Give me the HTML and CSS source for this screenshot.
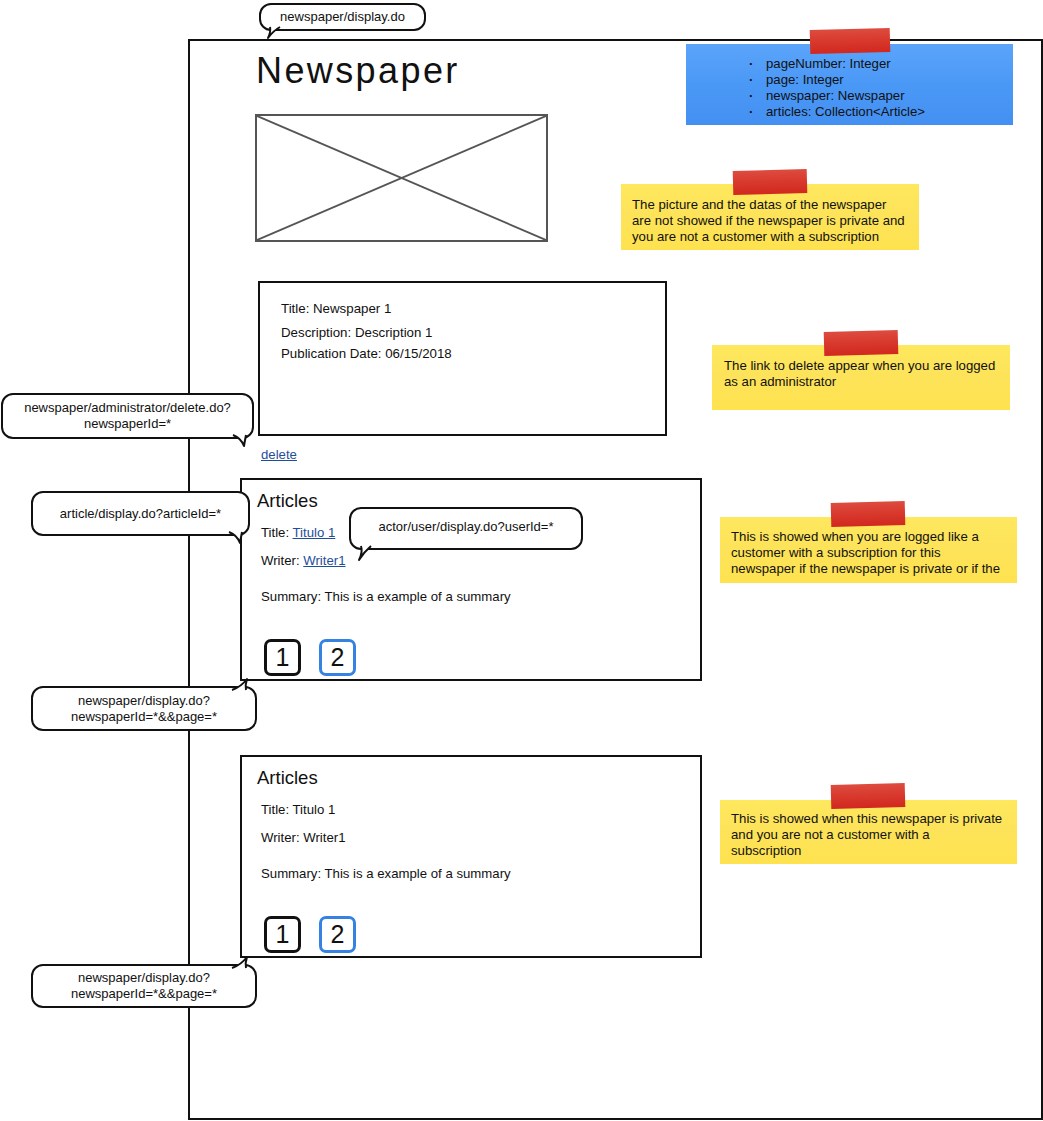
FILE: index.html
```html
<!DOCTYPE html>
<html>
<head>
    <meta charset="utf-8">
    <title>Newspaper - display</title>
    <link rel="stylesheet" href="styles.css">
</head>
<body>
    <div class="canvas">
        <div class="browser">
            <h1 class="page-title">Newspaper</h1>

            <div class="picture">
                <svg viewBox="0 0 293 128" preserveAspectRatio="none">
                    <line x1="0" y1="0" x2="293" y2="128" />
                    <line x1="293" y1="0" x2="0" y2="128" />
                </svg>
            </div>

            <div class="info-box">
                <p class="info-line">Title: Newspaper 1</p>
                <p class="info-line second">Description: Description 1</p>
                <p class="info-line third">Publication Date: 06/15/2018</p>
            </div>

            <a class="delete-link" href="#">delete</a>

            <div class="articles first-box">
                <h2 class="articles-title">Articles</h2>
                <p class="row">Title: <a href="#">Titulo 1</a></p>
                <p class="row writer">Writer: <a href="#">Writer1</a></p>
                <p class="row summary">Summary: This is a example of a summary</p>
                <div class="pager">
                    <span class="page-btn">1</span>
                    <span class="page-btn current">2</span>
                </div>
            </div>

            <div class="articles second-box">
                <h2 class="articles-title">Articles</h2>
                <p class="row">Title: Titulo 1</p>
                <p class="row writer">Writer: Writer1</p>
                <p class="row summary">Summary: This is a example of a summary</p>
                <div class="pager">
                    <span class="page-btn">1</span>
                    <span class="page-btn current">2</span>
                </div>
            </div>
        </div>

        <!-- callouts -->
        <div class="bubble b-top">newspaper/display.do
            <svg class="tail tail-down-left" width="16" height="12" viewBox="0 0 16 12"><path d="M13 0 Q6 4 1 11 Q4 5 3 0" /></svg>
        </div>
        <div class="bubble b-delete">newspaper/administrator/delete.do?<br>newspaperId=*
            <svg class="tail tail-down-right" width="16" height="12" viewBox="0 0 16 12"><path d="M1 0 Q9 3 12 11 Q13 5 14 0" /></svg>
        </div>
        <div class="bubble b-article">article/display.do?articleId=*
            <svg class="tail tail-down-right" width="16" height="12" viewBox="0 0 16 12"><path d="M1 0 Q9 3 12 11 Q13 5 14 0" /></svg>
        </div>
        <div class="bubble b-user">actor/user/display.do?userId=*
            <svg class="tail tail-down-left" width="16" height="16" viewBox="0 0 16 16"><path d="M14 0 Q7 6 2 14 Q6 6 4 0" /></svg>
        </div>
        <div class="bubble b-page1">newspaper/display.do?<br>newspaperId=*&amp;&amp;page=*
            <svg class="tail tail-up-right" width="18" height="12" viewBox="0 0 18 12"><path d="M1 12 Q10 9 16 1 Q14 7 15 12" /></svg>
        </div>
        <div class="bubble b-page2">newspaper/display.do?<br>newspaperId=*&amp;&amp;page=*
            <svg class="tail tail-up-right" width="18" height="12" viewBox="0 0 18 12"><path d="M1 12 Q10 9 16 1 Q14 7 15 12" /></svg>
        </div>

        <!-- sticky notes -->
        <div class="note blue-note">
            <span class="tape"></span>
            <ul class="vars">
                <li>pageNumber: Integer</li>
                <li>page: Integer</li>
                <li>newspaper: Newspaper</li>
                <li>articles: Collection&lt;Article&gt;</li>
            </ul>
        </div>
        <div class="note n-picture">
            <span class="tape"></span>
            The picture and the datas of the newspaper<br>are not showed if the newspaper is private and<br>you are not a customer with a subscription
        </div>
        <div class="note n-delete">
            <span class="tape"></span>
            The link to delete appear when you are logged<br>as an administrator
        </div>
        <div class="note n-customer">
            <span class="tape"></span>
            This is showed when you are logged like a<br>customer with a subscription for this<br>newspaper if the newspaper is private or if the
        </div>
        <div class="note n-private">
            <span class="tape"></span>
            This is showed when this newspaper is private<br>and you are not a customer with a<br>subscription
        </div>
    </div>
</body>
</html>
```

FILE: styles.css
```css
body {
    margin: 0;
    padding: 0;
    background-color: #ffffff;
    font-family: "Liberation Sans", Arial, sans-serif;
    color: #111;
}

.canvas {
    position: relative;
    width: 1043px;
    height: 1121px;
    padding-top: 39px;
    box-sizing: border-box;
    overflow: hidden;
}

p {
    margin: 0;
}

/* main browser frame */
.browser {
    margin-left: 188px;
    width: 855px;
    height: 1081px;
    border: 2px solid #111;
    box-sizing: border-box;
}

.page-title {
    margin: 8px 0 0 66px;
    font-size: 36px;
    line-height: 44px;
    font-weight: normal;
    letter-spacing: 2.4px;
}

.picture {
    width: 293px;
    height: 128px;
    margin: 21px 0 0 65px;
    border: 2px solid #555;
    box-sizing: border-box;
}

.picture svg {
    display: block;
    width: 100%;
    height: 100%;
}

.picture line {
    stroke: #555;
    stroke-width: 2;
}

.info-box {
    width: 409px;
    height: 155px;
    margin: 39px 0 0 68px;
    padding: 18px 0 0 21px;
    border: 2px solid #111;
    box-sizing: border-box;
    font-size: 13.3px;
}

.info-line {
    line-height: 16px;
}

.info-line.second {
    margin-top: 8px;
}

.info-line.third {
    margin-top: 5px;
}

.delete-link {
    display: block;
    width: max-content;
    margin: 11px 0 0 71px;
    font-size: 13.2px;
    line-height: 16px;
    color: #1f4e99;
}

/* articles panels */
.articles {
    width: 462px;
    height: 203px;
    margin-left: 50px;
    padding: 11px 0 0 15px;
    border: 2px solid #111;
    box-sizing: border-box;
}

.first-box {
    margin-top: 15px;
}

.second-box {
    margin-top: 74px;
}

.articles-title {
    margin: 0;
    font-size: 18.5px;
    line-height: 20px;
    font-weight: normal;
}

.row {
    margin: 14px 0 0 4px;
    font-size: 13.2px;
    line-height: 16px;
}

.row a {
    color: #1f4e99;
}

.row.writer {
    margin-top: 12px;
}

.row.summary {
    margin-top: 20px;
}

.pager {
    display: flex;
    gap: 18px;
    margin: 34px 0 0 7px;
}

.page-btn {
    width: 37px;
    height: 37px;
    border: 3px solid #111;
    border-radius: 7px;
    box-sizing: border-box;
    font-size: 25px;
    line-height: 31px;
    text-align: center;
}

.page-btn.current {
    border-color: #3582e3;
}

/* speech bubbles */
.bubble {
    position: absolute;
    border: 2px solid #111;
    border-radius: 12px;
    background: #fff;
    box-sizing: border-box;
    font-size: 13px;
    line-height: 16px;
    text-align: center;
    white-space: nowrap;
    display: flex;
    align-items: center;
    justify-content: center;
}

.tail {
    position: absolute;
    overflow: visible;
}

.tail path {
    fill: #fff;
    stroke: #111;
    stroke-width: 2;
    stroke-linejoin: round;
}

.tail-down-left {
    left: 6px;
    top: 100%;
    margin-top: -2px;
}

.tail-down-right {
    right: 4px;
    top: 100%;
    margin-top: -2px;
}

.tail-up-right {
    right: 6px;
    bottom: 100%;
    margin-bottom: -2px;
}

.b-top {
    left: 259px;
    top: 3px;
    width: 167px;
    height: 28px;
}

.b-delete {
    left: 1px;
    top: 393px;
    width: 253px;
    height: 46px;
}

.b-article {
    left: 31px;
    top: 491px;
    width: 219px;
    height: 45px;
}

.b-user {
    left: 349px;
    top: 507px;
    width: 234px;
    height: 43px;
    padding-bottom: 4px;
}

.b-page1 {
    left: 31px;
    top: 686px;
    width: 226px;
    height: 45px;
}

.b-page2 {
    left: 31px;
    top: 964px;
    width: 226px;
    height: 44px;
}

/* sticky notes */
.note {
    position: absolute;
    box-sizing: border-box;
    font-size: 13.2px;
    line-height: 16px;
    white-space: nowrap;
    color: #111;
    background: linear-gradient(180deg, #fee85e 0%, #fde35a 45%, #fee24f 100%);
}

.tape {
    position: absolute;
    width: 74px;
    height: 24px;
    background: linear-gradient(180deg, #dd4c40 0%, #d93a2e 45%, #d1281f 100%);
    transform: rotate(-1.5deg);
}

.blue-note {
    left: 686px;
    top: 44px;
    width: 327px;
    height: 81px;
    background: linear-gradient(180deg, #5ba4fa 0%, #4a98f6 50%, #4490f2 100%);
}

.blue-note .tape {
    left: 124px;
    top: -15px;
    width: 80px;
}

.vars {
    margin: 12px 0 0 64px;
    padding: 0 0 0 16px;
    list-style: none;
}

.vars li {
    position: relative;
}

.vars li::before {
    content: "\00B7";
    position: absolute;
    left: -17px;
    font-weight: bold;
}

.n-picture {
    left: 621px;
    top: 184px;
    width: 298px;
    height: 66px;
    padding: 13px 0 0 11px;
}

.n-picture .tape {
    left: 112px;
    top: -14px;
}

.n-delete {
    left: 712px;
    top: 345px;
    width: 298px;
    height: 65px;
    padding: 13px 0 0 12px;
}

.n-delete .tape {
    left: 112px;
    top: -14px;
}

.n-customer {
    left: 720px;
    top: 517px;
    width: 297px;
    height: 66px;
    padding: 12px 0 0 11px;
}

.n-customer .tape {
    left: 111px;
    top: -15px;
}

.n-private {
    left: 720px;
    top: 800px;
    width: 297px;
    height: 64px;
    padding: 11px 0 0 11px;
}

.n-private .tape {
    left: 111px;
    top: -16px;
}
```
